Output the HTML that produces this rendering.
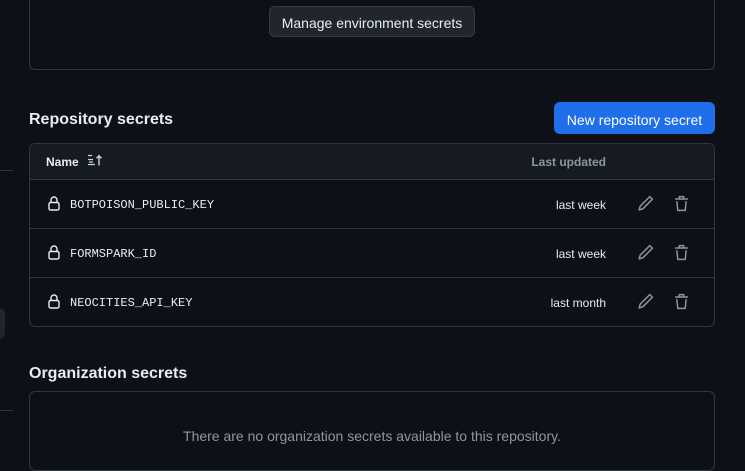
<!DOCTYPE html>
<html><head><style>
*{box-sizing:border-box;margin:0;padding:0}
body{width:745px;height:443px;background:#0d1117;font-family:"Liberation Sans",sans-serif;color:#e6edf3;position:relative;overflow:hidden}
.abs{position:absolute}
.box{border:1px solid #30363d;border-radius:6px}
.mono{font-family:"Liberation Mono",monospace;font-size:12px;color:#e6edf3}
.row{position:absolute;left:30px;width:684px;height:49px;border-top:1px solid #30363d}
.upd{position:absolute;right:108px;top:18px;font-size:12px;color:#e6edf3}
</style></head><body>
<div class="abs box" style="left:29px;top:-10px;width:686px;height:80px"></div>
<div class="abs" style="left:269px;top:6px;width:206px;height:31px;background:#21262d;border:1px solid #363b42;border-radius:6px;font-size:14px;text-align:center;line-height:32px">Manage environment secrets</div>
<div class="abs" style="left:0;top:170px;width:13px;height:1px;background:#30363d"></div>
<div class="abs" style="left:-10px;top:308px;width:15px;height:31px;background:#21262d;border-radius:6px"></div>
<div class="abs" style="left:0;top:410px;width:13px;height:1px;background:#30363d"></div>
<div class="abs" style="left:29px;top:111px;font-size:16px;font-weight:bold">Repository secrets</div>
<div class="abs" style="left:554px;top:102px;width:161px;height:32px;background:#1f6feb;border-radius:6px;font-size:14px;text-align:center;line-height:36px;color:#fff">New repository secret</div>
<div class="abs box" style="left:29px;top:143px;width:686px;height:184px;overflow:hidden">
 <div style="height:36px;background:#161b22;position:relative">
  <div class="abs" style="left:16px;top:11px;font-size:12px;font-weight:bold">Name</div>
  <svg class="abs" style="left:57px;top:10px" width="16" height="13" viewBox="0 0 16 13"><path d="M1 1.5h4M1 5.5h5M1 10.5h7M2 8h4" stroke="#c9d1d9" stroke-width="1.2"/><path d="M12 11.5V1.8M9.5 4.3L12 1.6 14.5 4.3" stroke="#c9d1d9" stroke-width="1.4" fill="none"/></svg>
  <div class="abs" style="right:108px;top:11px;font-size:12px;font-weight:bold;color:#8d96a0">Last updated</div>
 </div>
</div>
<div id="rows"></div>
<script>
var d=[["BOTPOISON_PUBLIC_KEY","last week"],["FORMSPARK_ID","last week"],["NEOCITIES_API_KEY","last month"]];
var h="";d.forEach(function(r,i){var t=179+i*49;
h+='<div class="row" style="top:'+t+'px">'+
'<svg class="abs" style="left:18px;top:16px" width="12" height="15" viewBox="0 0 12 15"><rect x="1" y="6.5" width="10" height="7.5" rx="1.5" fill="none" stroke="#e6edf3" stroke-width="1.4"/><path d="M3 6.5V4a3 3 0 0 1 6 0v2.5" fill="none" stroke="#e6edf3" stroke-width="1.4"/></svg>'+
'<div class="abs mono" style="left:40px;top:18px">'+r[0]+'</div><div class="upd">'+r[1]+'</div>'+
'<svg class="abs" style="left:607px;top:15px" width="17" height="17" viewBox="0 0 16 16"><path d="M12 1.5l2.5 2.5-9 9-3.5 1 1-3.5z" fill="none" stroke="#8d96a0" stroke-width="1.4" stroke-linejoin="round"/></svg>'+
'<svg class="abs" style="left:644px;top:15px" width="15" height="17" viewBox="0 0 14 16"><path d="M1 3.8h12M5 3.8V1.5h4v2.3M2.6 5.8l.9 8.7h7l.9-8.7" fill="none" stroke="#8d96a0" stroke-width="1.4"/></svg>'+
'</div>';});
document.getElementById("rows").innerHTML=h;
</script>
<div class="abs" style="left:29px;top:365px;font-size:16px;font-weight:bold">Organization secrets</div>
<div class="abs box" style="left:29px;top:391px;width:686px;height:80px"></div>
<div class="abs" style="left:29px;top:428px;width:686px;text-align:center;font-size:14px;color:#8d96a0">There are no organization secrets available to this repository.</div>
</body></html>
